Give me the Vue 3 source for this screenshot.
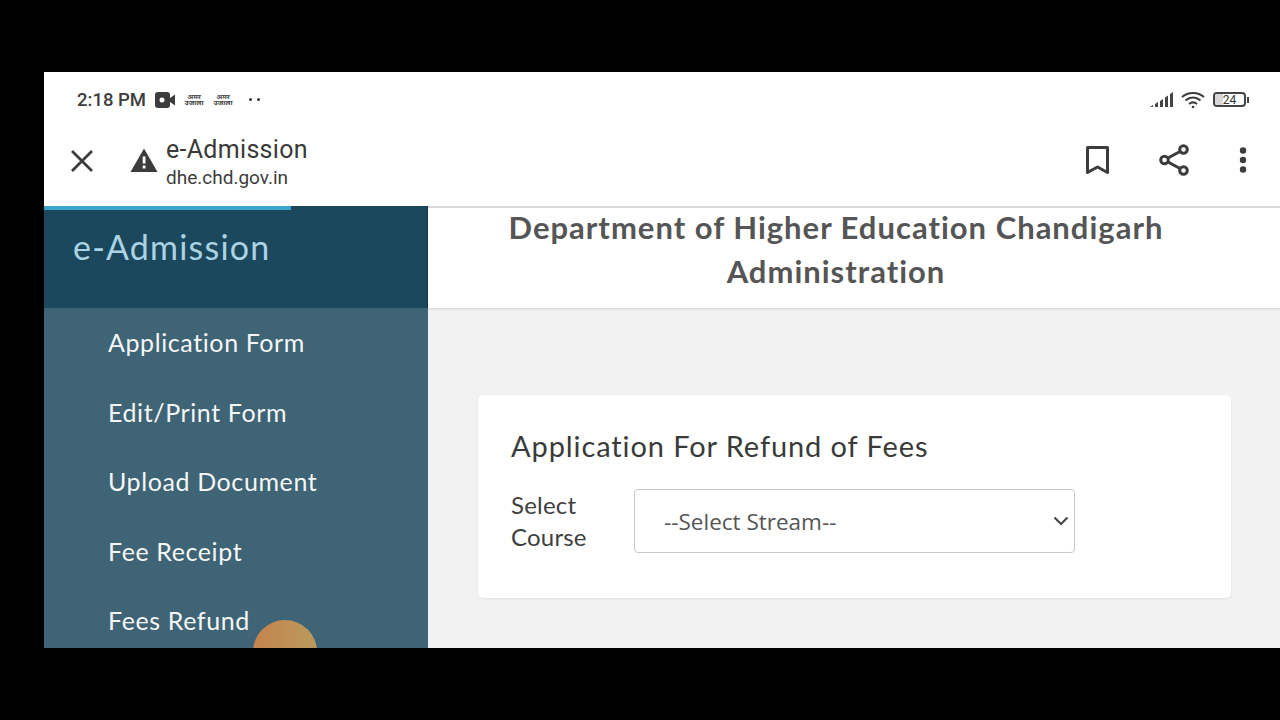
<template>
  <div class="screen">
    <div class="phone">
      <header class="chrome">
        <div class="status-bar">
          <div class="status-left">
            <span class="time">2:18 PM</span>
            <svg class="cam" width="20" height="16" viewBox="0 0 20 16">
              <rect x="0" y="0" width="15" height="16" rx="3" fill="#3c3c3c" />
              <path d="M15 6l5-3.500v11l-5-3.500z" fill="#3c3c3c" />
              <circle cx="7" cy="8" r="2.500" fill="#fff" />
            </svg>
            <span class="news">अमर उजाला</span>
            <span class="news">अमर उजाला</span>
            <span class="dots"><i></i><i></i></span>
          </div>
          <div class="status-right">
            <svg width="23" height="16" viewBox="0 0 23 16">
              <path d="M0 15h3v-2l-3 2zM5 15h3V10l-3 2zM10 15h3V7l-3 2zM15 15h3V3.500l-3 2zM20 15h3V0l-3 2z" fill="#444" />
            </svg>
            <svg width="24" height="18" viewBox="0 0 24 18" fill="none" stroke="#3c3c3c" stroke-width="2">
              <path d="M1 6c6-5.500 16-5.500 22 0" />
              <path d="M4.500 9.500c4.500-4 10.500-4 15 0" />
              <path d="M8 13c2.500-2 5.500-2 8 0" />
              <circle cx="12" cy="16" r="1.300" fill="#3c3c3c" stroke="none" />
            </svg>
            <div class="battery">
              <span class="battery-box"><span class="battery-fill"></span><span class="battery-num">24</span></span>
              <span class="battery-tip"></span>
            </div>
          </div>
        </div>
        <div class="toolbar">
          <svg class="close" width="24" height="24" viewBox="0 0 24 24" stroke="#3c3c3c" stroke-width="2.800" fill="none">
            <path d="M2 2l20 20M22 2L2 22" />
          </svg>
          <svg class="warn" width="28" height="24" viewBox="0 0 28 24">
            <path d="M14 0.500L27.500 24H0.500z" fill="#3c3c3c" />
            <rect x="12.700" y="8.500" width="2.800" height="7" fill="#fff" />
            <rect x="12.700" y="17.500" width="2.800" height="3" fill="#fff" />
          </svg>
          <div class="page-title">
            <div class="title">e-Admission</div>
            <div class="url">dhe.chd.gov.in</div>
          </div>
          <div class="actions">
            <svg width="23" height="28" viewBox="0 0 23 28" fill="none" stroke="#3c3c3c" stroke-width="3">
              <path d="M1.500 1.500h20v25l-10-5.500-10 5.500z" stroke-linejoin="round" />
            </svg>
            <svg width="30" height="32" viewBox="0 0 30 32" fill="none" stroke="#3c3c3c" stroke-width="3">
              <circle cx="5.500" cy="16" r="3.800" />
              <circle cx="24.500" cy="5.500" r="3.800" />
              <circle cx="24.500" cy="26.500" r="3.800" />
              <path d="M9 14l12-6.500M9 18l12 6.500" />
            </svg>
            <svg width="8" height="26" viewBox="0 0 8 26" fill="#3c3c3c">
              <circle cx="4" cy="3.500" r="3.200" />
              <circle cx="4" cy="13" r="3.200" />
              <circle cx="4" cy="22.500" r="3.200" />
            </svg>
          </div>
        </div>
        <div class="progress"></div>
      </header>

      <div class="page">
        <aside class="sidebar">
          <div class="brand">e-Admission</div>
          <nav class="menu">
            <a v-for="item in menu" :key="item" class="menu-item">{{ item }}</a>
          </nav>
          <span class="touch"></span>
        </aside>
        <main class="main">
          <div class="dept">
            <h1>Department of Higher Education Chandigarh Administration</h1>
          </div>
          <div class="content">
            <section class="card">
              <h2>Application For Refund of Fees</h2>
              <div class="form-row">
                <label>Select Course</label>
                <div class="select">
                  <span>--Select Stream--</span>
                  <svg width="16" height="10" viewBox="0 0 16 10" fill="none" stroke="#444" stroke-width="2">
                    <path d="M1.500 1.500L8 8l6.500-6.500" />
                  </svg>
                </div>
              </div>
            </section>
          </div>
        </main>
      </div>
    </div>
  </div>
</template>

<script setup>
const menu = ['Application Form', 'Edit/Print Form', 'Upload Document', 'Fee Receipt', 'Fees Refund']
</script>

<style scoped>
.screen {
  width: 1280px;
  height: 720px;
  background: #000;
  padding: 72px 0 72px 44px;
  box-sizing: border-box;
  overflow: hidden;
}

.phone {
  width: 1236px;
  height: 576px;
  background: #fff;
  display: flex;
  flex-direction: column;
  overflow: hidden;
}

.chrome {
  position: relative;
  height: 134px;
  flex: none;
  background: #fff;
  font-family: Roboto, sans-serif;
  color: #333;
}

.status-bar {
  height: 55px;
  display: flex;
  justify-content: space-between;
  align-items: center;
  padding: 0 31px 0 33px;
}

.status-left,
.status-right {
  display: flex;
  align-items: center;
}

.time {
  font-size: 18.500px;
  font-weight: 500;
  color: #3c3c3c;
  margin-right: 9px;
}

.news {
  width: 20px;
  margin-left: 9px;
  font-family: "Noto Sans", "DejaVu Sans", sans-serif;
  font-size: 7px;
  line-height: 6px;
  font-weight: 700;
  text-align: center;
  color: #444;
}

.dots {
  display: flex;
  gap: 5px;
  margin-left: 16px;
}

.dots i {
  width: 3px;
  height: 3px;
  border-radius: 50%;
  background: #333;
}

.status-right {
  gap: 8px;
}

.battery {
  display: flex;
  align-items: center;
}

.battery-box {
  position: relative;
  width: 29px;
  height: 11px;
  border: 2px solid #444;
  border-radius: 4px;
  display: block;
  overflow: hidden;
}

.battery-fill {
  position: absolute;
  left: 0;
  top: 0;
  bottom: 0;
  width: 8px;
  background: #d8d8d8;
}

.battery-num {
  position: absolute;
  inset: 0;
  text-align: center;
  font-size: 12px;
  line-height: 12px;
  color: #333;
}

.battery-tip {
  width: 2px;
  height: 6px;
  margin-left: 1px;
  background: #444;
}

.toolbar {
  height: 66px;
  display: flex;
  align-items: center;
  padding: 0 33px 0 26px;
}

.close {
  margin-right: 36px;
  margin-top: 2px;
}

.warn {
  margin-right: 8px;
}

.page-title {
  display: flex;
  flex-direction: column;
  margin-top: 4px;
}

.title {
  font-size: 25px;
  line-height: 32px;
  color: #3a3a3a;
  letter-spacing: 0.3px;
}

.url {
  font-size: 19px;
  line-height: 24px;
  color: #3c3c3c;
}

.actions {
  margin-left: auto;
  display: flex;
  align-items: center;
  gap: 50px;
}

.progress {
  position: absolute;
  left: 0;
  bottom: -4px;
  width: 247px;
  height: 4px;
  background: #3ba5cc;
  z-index: 2;
}

.chrome::after {
  content: "";
  position: absolute;
  left: 384px;
  right: 0;
  bottom: -2px;
  height: 2px;
  background: #d9d9d9;
}

.page {
  flex: 1;
  display: flex;
  min-height: 0;
}

.sidebar {
  position: relative;
  width: 384px;
  flex: none;
  background: #3f6475;
  overflow: hidden;
  font-family: Lato, "Open Sans", sans-serif;
}

.brand {
  height: 102px;
  box-sizing: border-box;
  padding: 21px 0 0 29px;
  background: #1b485d;
  border-right: 1px solid #12374a;
  color: #abd3e3;
  font-size: 34px;
  line-height: 40px;
  letter-spacing: 1.200px;
}

.menu {
  display: flex;
  flex-direction: column;
  padding: 14px 0 0 64px;
}

.menu-item {
  height: 69.500px;
  color: #fff;
  font-size: 25px;
  line-height: 40px;
  letter-spacing: 0.600px;
  opacity: 0.95;
}

.touch {
  position: absolute;
  left: 209px;
  top: 414px;
  width: 64px;
  height: 64px;
  border-radius: 50%;
  background: linear-gradient(to right, #c4834d, #b99a5e);
}

.main {
  flex: 1;
  display: flex;
  flex-direction: column;
  background: #f2f2f2;
  font-family: Lato, "Open Sans", sans-serif;
  min-width: 0;
}

.dept {
  height: 102px;
  flex: none;
  box-sizing: border-box;
  background: #fff;
  box-shadow: 0 1px 2px rgba(0, 0, 0, 0.15);
  padding: 0 76px 0 40px;
}

h1 {
  margin: -1px 0 0;
  font-size: 31px;
  line-height: 44px;
  font-weight: 700;
  letter-spacing: 1px;
  text-align: center;
  color: #555;
}

.content {
  padding: 87px 49px 0 50px;
}

.card {
  height: 203px;
  box-sizing: border-box;
  background: #fff;
  border-radius: 5px;
  box-shadow: 0 1px 3px rgba(0, 0, 0, 0.08);
  padding: 31px 33px;
}

h2 {
  margin: 0 0 23px;
  font-size: 29px;
  line-height: 40px;
  font-weight: 400;
  letter-spacing: 0.900px;
  color: #3a3a3a;
}

.form-row {
  display: flex;
  align-items: center;
}

label {
  width: 123px;
  flex: none;
  font-size: 24px;
  line-height: 32px;
  letter-spacing: 0.200px;
  color: #3f3f3f;
}

.select {
  width: 441px;
  height: 64px;
  box-sizing: border-box;
  border: 1px solid #c8c8c8;
  border-radius: 4px;
  display: flex;
  align-items: center;
  justify-content: space-between;
  padding: 0 5px 0 29px;
  font-family: "Open Sans", sans-serif;
  font-size: 22.500px;
  color: #555;
}
</style>

<style>
html,
body {
  margin: 0;
  background: #000;
}
</style>
